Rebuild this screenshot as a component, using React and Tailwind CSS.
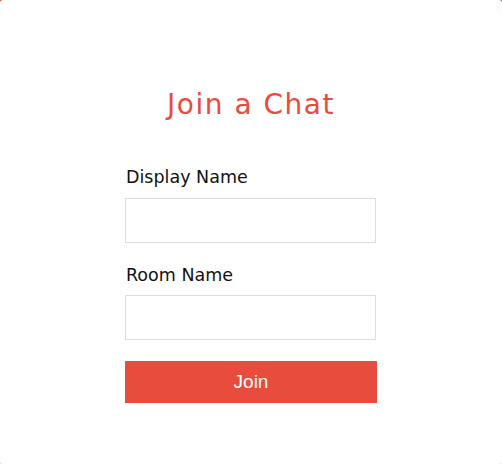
import React, { useState } from 'react';

function App() {
  const [displayName, setDisplayName] = useState('');
  const [roomName, setRoomName] = useState('');

  return (
    <div className="w-[502px] h-[464px] bg-gradient-to-b from-[#e84c3d] via-white to-[#dddddd]">
      <div className="h-full bg-white rounded-[3px] font-['DejaVu_Sans',sans-serif]">
        <div className="w-[252px] mx-auto pt-[88px]">
          {/* Title */}
          <h1 className="text-center text-[28px] leading-[34px] tracking-[1.5px] text-[#e84c3d] font-normal">
            Join a Chat
          </h1>

          {/* Form */}
          <form className="mt-[44px]" onSubmit={(e) => e.preventDefault()}>
            <label className="block pl-px text-[17.5px] leading-[22px] text-[#111] font-normal">Display Name</label>
            <input
              type="text"
              value={displayName}
              onChange={(e) => setDisplayName(e.target.value)}
              className="block mt-[10px] w-[251px] h-[45px] border border-[#dddddd] bg-white outline-none px-3"
            />

            <label className="block mt-[21px] pl-px text-[17.5px] leading-[22px] text-[#111] font-normal">Room Name</label>
            <input
              type="text"
              value={roomName}
              onChange={(e) => setRoomName(e.target.value)}
              className="block mt-[9px] w-[251px] h-[45px] border border-[#dddddd] bg-white outline-none px-3"
            />

            <button
              type="submit"
              className="block mt-[21px] w-[252px] h-[42px] bg-[#e84c3d] text-white text-[19px] font-['Liberation_Sans',Arial,sans-serif]"
            >
              Join
            </button>
          </form>
        </div>
      </div>
    </div>
  );
}

export default App;
